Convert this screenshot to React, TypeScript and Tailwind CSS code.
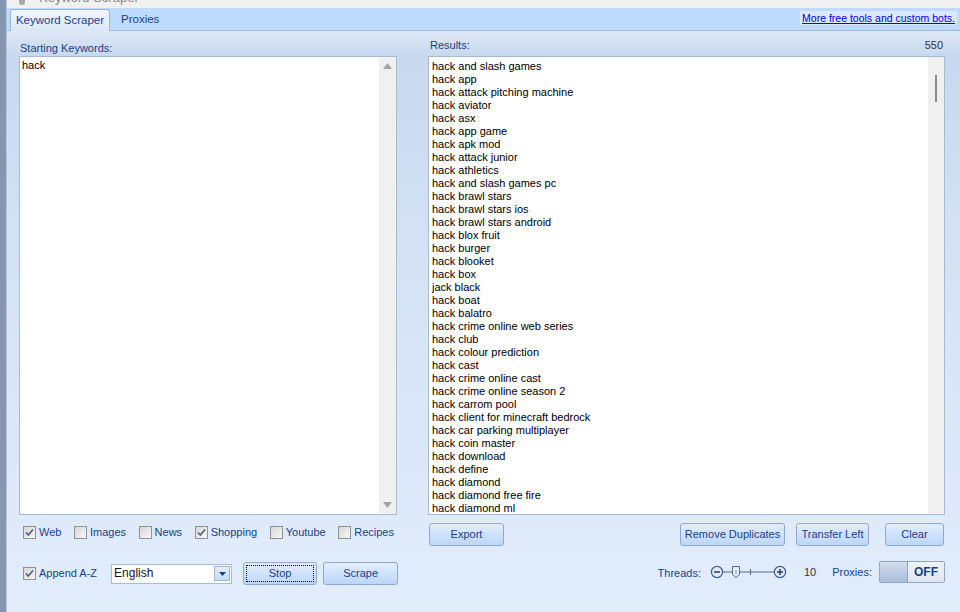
import React from "react";

const results = [
  "hack and slash games",
  "hack app",
  "hack attack pitching machine",
  "hack aviator",
  "hack asx",
  "hack app game",
  "hack apk mod",
  "hack attack junior",
  "hack athletics",
  "hack and slash games pc",
  "hack brawl stars",
  "hack brawl stars ios",
  "hack brawl stars android",
  "hack blox fruit",
  "hack burger",
  "hack blooket",
  "hack box",
  "jack black",
  "hack boat",
  "hack balatro",
  "hack crime online web series",
  "hack club",
  "hack colour prediction",
  "hack cast",
  "hack crime online cast",
  "hack crime online season 2",
  "hack carrom pool",
  "hack client for minecraft bedrock",
  "hack car parking multiplayer",
  "hack coin master",
  "hack download",
  "hack define",
  "hack diamond",
  "hack diamond free fire",
  "hack diamond ml",
];

const engines = [
  { label: "Web", checked: true },
  { label: "Images", checked: false },
  { label: "News", checked: false },
  { label: "Shopping", checked: true },
  { label: "Youtube", checked: false },
  { label: "Recipes", checked: false },
];

const Checkbox = ({ checked }: { checked: boolean }) => (
  <span className="w-[13px] h-[13px] shrink-0 border border-[#8f9194] bg-linear-to-br from-[#d6d6d6] to-[#f7f7f7] flex items-center justify-center">
    {checked && (
      <svg width="11" height="11" viewBox="0 0 11 11">
        <path d="M2 5.5 L4.3 8 L9 2.5" fill="none" stroke="#4b5f83" strokeWidth="1.6" />
      </svg>
    )}
  </span>
);

const Button = ({
  children,
  className = "",
}: {
  children: React.ReactNode;
  className?: string;
}) => (
  <div
    className={`h-[23px] shrink-0 whitespace-nowrap rounded-[3px] border border-[#8eaad2] bg-linear-to-b from-[#e2eefd] to-[#bcd6f8] text-[#15428b] flex items-center justify-center ${className}`}
  >
    {children}
  </div>
);

export default function App() {
  return (
    <div className="w-[960px] h-[612px] overflow-hidden flex font-['Liberation_Sans',Arial,sans-serif] text-[11px] leading-[13px] bg-[#f0f0f0]">
      {/* window frame edge */}
      <div className="w-[7px] h-full bg-[#8597b0] border-r border-[#b4c6df]" />

      <div className="flex-1 flex flex-col">
        {/* title bar, scrolled almost out of view */}
        <div className="h-[8px] overflow-hidden bg-[#f0f0f0] pl-[12px]">
          <div className="-mt-[10px] flex items-end gap-[14px] text-[13px] leading-[15px] text-[#8a8a8a]">
            <span className="w-[6px] h-[12px] bg-[#a8a8a8] rounded-sm" />
            <span className="whitespace-nowrap">Keyword Scraper</span>
          </div>
        </div>

        {/* tab strip */}
        <div className="h-[23px] bg-[#bfdbff] border-b border-[#9ebbe0] flex items-end pl-[3px] pr-[3px]">
          <div className="h-[22px] -mb-px w-[100px] flex items-center justify-center rounded-t-[3px] border border-b-0 border-[#9ab6dc] bg-linear-to-b from-[#f4f8fe] to-[#dbe7f6] text-[11.5px] text-[#15428b]">
            Keyword Scraper
          </div>
          <div className="h-[21px] px-[11px] flex items-center text-[11.5px] text-[#15428b]">Proxies</div>
          <div className="flex-1" />
          <div className="self-center mb-[2px] px-[2px] bg-[#dbe8fc] text-[10.5px] leading-[14px] text-[#0000ff] underline whitespace-nowrap">
            More free tools and custom bots.
          </div>
        </div>

        {/* main panel */}
        <div className="flex-1 flex pl-[12px] gap-[31px] bg-[linear-gradient(to_bottom,#dde8f6_0px,#c8d9ef_24px,#d3e2f4_220px,#e2edfc_100%)]">
          {/* starting keywords */}
          <div className="w-[378px] shrink-0 flex flex-col">
            <div className="h-[25px] flex items-end pb-[1px] pl-px text-[#15428b]">Starting Keywords:</div>
            <div className="h-[459px] border border-[#a3bad8] bg-white flex">
              <div className="flex-1 pl-[2px] pt-[2px] text-black">hack</div>
              <div className="w-[17px] bg-[#f0f0f0] flex flex-col items-center justify-between py-[6px]">
                <svg width="9" height="6" viewBox="0 0 9 6">
                  <path d="M0 6 L4.5 0 L9 6 Z" fill="#a3a3a3" />
                </svg>
                <svg width="9" height="6" viewBox="0 0 9 6">
                  <path d="M0 0 L4.5 6 L9 0 Z" fill="#a3a3a3" />
                </svg>
              </div>
            </div>

            <div className="mt-[11px] h-[13px] flex items-center justify-between pl-[4px] pr-[3px] text-[#15428b]">
              {engines.map((e) => (
                <label key={e.label} className="flex items-center gap-[3px] whitespace-nowrap">
                  <Checkbox checked={e.checked} />
                  <span>{e.label}</span>
                </label>
              ))}
            </div>

            <div className="mt-[23px] h-[23px] flex items-center">
              <label className="flex items-center gap-[3px] ml-[4px] text-[#15428b] whitespace-nowrap shrink-0">
                <Checkbox checked />
                <span>Append A-Z</span>
              </label>
              <div className="ml-[14px] w-[121px] h-[20px] shrink-0 border border-[#a6bcd9] bg-white flex items-center justify-between pl-[2px] pr-px">
                <span className="text-[12px] text-[#1d1020]">English</span>
                <span className="w-[16px] h-[15px] border border-[#9ab3d6] bg-linear-to-b from-[#e6f0fd] to-[#c5dbf8] flex items-center justify-center">
                  <svg width="7" height="4" viewBox="0 0 7 4">
                    <path d="M0 0 L3.5 4 L7 0 Z" fill="#15428b" />
                  </svg>
                </span>
              </div>
              <Button className="ml-[11px] w-[74px] border-[#5f80b3] from-[#d8e8fc] to-[#b6d2f7] p-[2px]">
                <span className="w-full h-full flex items-center justify-center border border-dotted border-black">Stop</span>
              </Button>
              <Button className="ml-[6px] w-[75px]">Scrape</Button>
            </div>
          </div>

          {/* results */}
          <div className="w-[517px] shrink-0 flex flex-col">
            <div className="h-[25px] flex items-end justify-between pb-[4px] pl-[2px] pr-[2px] text-[#15428b]">
              <span>Results:</span>
              <span className="text-[#333]">550</span>
            </div>
            <div className="h-[459px] border border-[#a3bad8] bg-white flex overflow-hidden">
              <div className="flex-1 pl-[3px] pt-[3px] text-black">
                {results.map((r, i) => (
                  <div key={i}>{r}</div>
                ))}
              </div>
              <div className="w-[16px] bg-[#f0f0f0] flex justify-center pt-[18px]">
                <div className="w-[2px] h-[27px] bg-[#8a8a8a]" />
              </div>
            </div>

            <div className="mt-[8px] flex items-center pl-px">
              <Button className="w-[75px]">Export</Button>
              <div className="flex-1" />
              <Button className="w-[105px]">Remove Duplicates</Button>
              <Button className="ml-[11px] w-[73px]">Transfer Left</Button>
              <Button className="ml-[16px] w-[59px] mr-px">Clear</Button>
            </div>

            <div className="mt-[15px] h-[22px] flex items-center justify-end text-[#15428b]">
              <span className="mt-[2px]">Threads:</span>
              <svg className="ml-[9px]" width="82" height="16" viewBox="0 0 82 16">
                <line x1="13" y1="8" x2="64" y2="8" stroke="#4e6a97" strokeWidth="1" />
                <line x1="40.5" y1="5" x2="40.5" y2="11" stroke="#4e6a97" strokeWidth="1" />
                <circle cx="7" cy="8" r="5.6" fill="#dfe9f7" stroke="#3f5d8e" strokeWidth="1.2" />
                <line x1="4" y1="8" x2="10" y2="8" stroke="#2c4676" strokeWidth="1.6" />
                <circle cx="70" cy="8" r="5.6" fill="#dfe9f7" stroke="#3f5d8e" strokeWidth="1.2" />
                <line x1="67" y1="8" x2="73" y2="8" stroke="#2c4676" strokeWidth="1.6" />
                <line x1="70" y1="5" x2="70" y2="11" stroke="#2c4676" strokeWidth="1.6" />
                <path d="M22.5 2.5 H29.5 V10.5 L26 13.5 L22.5 10.5 Z" fill="#e8eef8" stroke="#4e6a97" strokeWidth="1" />
                <line x1="26" y1="6" x2="26" y2="10" stroke="#7d93b8" strokeWidth="1" />
              </svg>
              <span className="ml-[12px] text-[#333]">10</span>
              <span className="ml-[16px]">Proxies:</span>
              <div className="ml-[7px] w-[66px] h-[22px] border border-[#8ea7c9] rounded-[2px] flex overflow-hidden">
                <div className="w-[28px] h-full bg-linear-to-b from-[#d3deec] to-[#a9bdd8] border-r border-[#8ea7c9]" />
                <div className="flex-1 bg-linear-to-b from-[#f0f4fa] to-[#dde6f2] flex items-center justify-center text-[12px] font-bold text-[#15428b]">
                  OFF
                </div>
              </div>
            </div>
          </div>
        </div>
      </div>
    </div>
  );
}
